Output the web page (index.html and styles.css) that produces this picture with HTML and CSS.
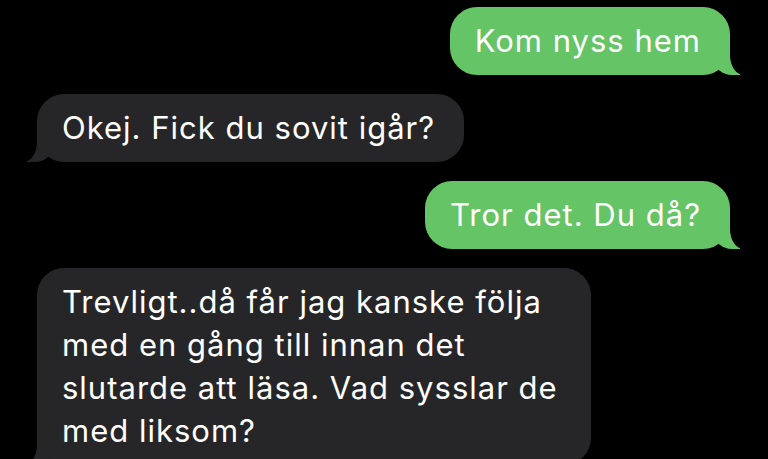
FILE: index.html
```html
<!DOCTYPE html>
<html lang="sv">
<head>
  <meta charset="UTF-8">
  <title>Meddelanden</title>
  <link rel="stylesheet" href="styles.css">
</head>
<body>

  <div class="conversation">
    <div class="bubble moi">Kom nyss hem</div>
    <div class="bubble lui">Okej. Fick du sovit igår?</div>
    <div class="bubble moi">Tror det. Du då?</div>
    <div class="bubble lui">Trevligt..då får jag kanske följa med en gång till innan det slutarde att läsa. Vad sysslar de med liksom?</div>
  </div>

</body>
</html>
```

FILE: styles.css
```css
body {
  margin: 0;
  background: #000;
  font-family: 'Inter', 'Liberation Sans', sans-serif;
  overflow: hidden;
}

.conversation {
  display: flex;
  flex-direction: column;
  gap: 19px;
  padding: 7px 38px 0 37px;
}

.bubble {
  position: relative;
  color: #fff;
  font-size: 31px;
  letter-spacing: 1px;
  line-height: 43px;
  padding: 12px 29px 13px 25px;
  border-radius: 27px;
  max-width: 500px;
}

.moi {
  align-self: flex-end;
  background: #65c466;
}

.lui {
  align-self: flex-start;
  background: #262628;
}

/* queue de la bulle */
.moi::before, .moi::after, .lui::before, .lui::after {
  content: "";
  position: absolute;
  bottom: 0;
  height: 28px;
}

.moi::before {
  right: -10px;
  width: 26px;
  background: #65c466;
  border-bottom-left-radius: 18px 16px;
}

.moi::after {
  right: -30px;
  width: 30px;
  background: #000;
  border-bottom-left-radius: 14px 20px;
}

.lui::before {
  left: -10px;
  width: 26px;
  background: #262628;
  border-bottom-right-radius: 18px 16px;
}

.lui::after {
  left: -30px;
  width: 30px;
  background: #000;
  border-bottom-right-radius: 14px 20px;
}
```
